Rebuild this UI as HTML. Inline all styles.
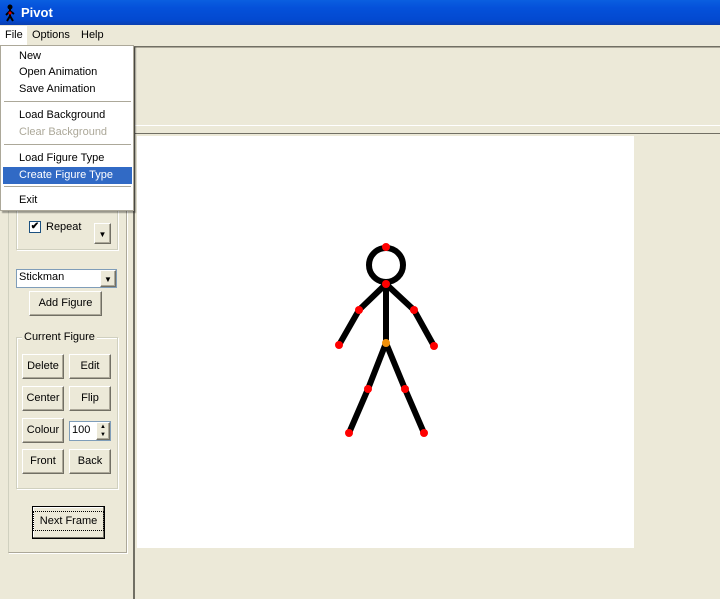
<!DOCTYPE html>
<html><head><meta charset="utf-8"><style>
*{margin:0;padding:0;box-sizing:border-box}
body{width:720px;height:599px;background:#ece9d8;position:relative;overflow:hidden;font-family:Tahoma,"Liberation Sans",sans-serif;font-size:11px;color:#000}
.a{position:absolute}
.btn{position:absolute;background:#ece9d8;border:1px solid;border-color:#fff #716f64 #716f64 #fff;box-shadow:inset -1px -1px 0 #aca899;text-align:center;font-size:11px}
.grp{position:absolute;border:1px solid #d0d0bf;box-shadow:inset 1px 1px 0 #fff,1px 1px 0 #fff}
</style></head><body>
<div class="a" style="left:0;top:0;width:720px;height:25px;background:linear-gradient(#0a5fe0,#0551da 30%,#0349d0 80%,#0a3fb0)"></div>
<svg class="a" style="left:3px;top:4px" width="14" height="18" viewBox="0 0 14 18"><circle cx="7" cy="3" r="2.5" fill="#000"/><path d="M7 5v7M7 7l-4 4M7 7l4 3M7 12l-3 5M7 12l3 5" stroke="#000" stroke-width="2"/><circle cx="7" cy="9" r="1.5" fill="#d00"/></svg>
<div class="a" style="left:21px;top:5px;color:#fff;font-weight:bold;font-size:13px;font-family:'Liberation Sans',sans-serif">Pivot</div>
<div class="a" style="left:0;top:25px;width:720px;height:20px;background:#ece9d8"></div>
<div class="a" style="left:0;top:26px;width:27px;height:19px;background:#fff"></div>
<div class="a" style="left:5px;top:29px">File</div>
<div class="a" style="left:32px;top:29px">Options</div>
<div class="a" style="left:81px;top:29px">Help</div>
<!-- top area -->
<div class="a" style="left:133px;top:46px;width:587px;height:1px;background:#716f64"></div>
<div class="a" style="left:133px;top:47px;width:587px;height:1px;background:#aca899"></div>
<div class="a" style="left:133px;top:46px;width:2px;height:553px;background:#716f64"></div>
<div class="a" style="left:135px;top:125px;width:585px;height:1px;background:#fff"></div>
<div class="a" style="left:135px;top:133px;width:585px;height:1px;background:#716f64"></div>
<div class="a" style="left:137px;top:136px;width:497px;height:412px;background:#fff"></div>
<!-- left panel -->
<div class="a" style="left:8px;top:46px;width:119px;height:507px;border:1px solid;border-color:#d0d0bf #aca899 #aca899 #d0d0bf;box-shadow:1px 1px 0 #fff"></div>
<div class="grp" style="left:16px;top:190px;width:102px;height:60px"></div>
<div class="a" style="left:29px;top:221px;width:12px;height:12px;background:#fff;border:1px solid #1c5180;font-size:10px;line-height:10px;text-align:center;font-weight:bold">✔</div>
<div class="a" style="left:46px;top:221px">Repeat</div>
<div class="btn" style="left:94px;top:223px;width:17px;height:21px;font-size:8px;line-height:22px">▼</div>
<div class="a" style="left:16px;top:269px;width:101px;height:19px;background:#fff;border:1px solid #7f9db9"></div>
<div class="a" style="left:19px;top:271px">Stickman</div>
<div class="btn" style="left:100px;top:270px;width:16px;height:17px;font-size:8px;line-height:17px">▼</div>
<div class="btn" style="left:29px;top:291px;width:73px;height:25px;line-height:23px">Add Figure</div>
<div class="grp" style="left:16px;top:337px;width:102px;height:152px"></div>
<div class="a" style="left:22px;top:331px;background:#ece9d8;padding:0 2px">Current Figure</div>
<div class="btn" style="left:22px;top:354px;width:42px;height:25px;line-height:23px">Delete</div>
<div class="btn" style="left:69px;top:354px;width:42px;height:25px;line-height:23px">Edit</div>
<div class="btn" style="left:22px;top:386px;width:42px;height:25px;line-height:23px">Center</div>
<div class="btn" style="left:69px;top:386px;width:42px;height:25px;line-height:23px">Flip</div>
<div class="btn" style="left:22px;top:418px;width:42px;height:25px;line-height:23px">Colour</div>
<div class="a" style="left:69px;top:421px;width:42px;height:20px;background:#fff;border:1px solid #7f9db9"></div>
<div class="a" style="left:72px;top:424px">100</div>
<div class="btn" style="left:96px;top:422px;width:14px;height:18px;font-size:6px;line-height:8px">▲<br>▼</div>
<div class="btn" style="left:22px;top:449px;width:42px;height:25px;line-height:23px">Front</div>
<div class="btn" style="left:69px;top:449px;width:42px;height:25px;line-height:23px">Back</div>
<div class="btn" style="left:32px;top:506px;width:73px;height:33px;line-height:29px;border:1px solid #000;box-shadow:inset -1px -1px 0 #716f64,inset 1px 1px 0 #fff"><span style="outline:1px dotted #000;outline-offset:3px;padding:0 3px">Next Frame</span></div>
<!-- stickman -->
<svg class="a" style="left:0;top:0" width="720" height="599">
<g stroke="#000" stroke-width="6" stroke-linecap="round" fill="none">
<circle cx="386" cy="265" r="17"/>
<path d="M386 284V343M386 284L359 310L339 345M386 284L414 310L434 346M386 343L368 389L349 433M386 343L405 389L424 433"/>
</g>
<g fill="#f00">
<circle cx="386" cy="247" r="4"/><circle cx="386" cy="284" r="4"/>
<circle cx="359" cy="310" r="4"/><circle cx="414" cy="310" r="4"/>
<circle cx="339" cy="345" r="4"/><circle cx="434" cy="346" r="4"/>
<circle cx="368" cy="389" r="4"/><circle cx="405" cy="389" r="4"/>
<circle cx="349" cy="433" r="4"/><circle cx="424" cy="433" r="4"/>
</g>
<circle cx="386" cy="343" r="4" fill="#f0900a"/>
</svg>
<!-- menu -->
<div class="a" style="left:0;top:45px;width:134px;height:166px;background:#fff;border:1px solid #aca899;box-shadow:2px 2px 1px rgba(0,0,0,0.35)"></div>
<div class="a" style="left:19px;top:50px">New</div>
<div class="a" style="left:19px;top:66px">Open Animation</div>
<div class="a" style="left:19px;top:83px">Save Animation</div>
<div class="a" style="left:4px;top:101px;width:127px;height:1px;background:#aca899"></div>
<div class="a" style="left:19px;top:109px">Load Background</div>
<div class="a" style="left:19px;top:126px;color:#aca899">Clear Background</div>
<div class="a" style="left:4px;top:144px;width:127px;height:1px;background:#aca899"></div>
<div class="a" style="left:19px;top:152px">Load Figure Type</div>
<div class="a" style="left:3px;top:167px;width:129px;height:17px;background:#316ac5"></div>
<div class="a" style="left:19px;top:169px;color:#fff">Create Figure Type</div>
<div class="a" style="left:4px;top:186px;width:127px;height:1px;background:#aca899"></div>
<div class="a" style="left:19px;top:194px">Exit</div>
</body></html>
